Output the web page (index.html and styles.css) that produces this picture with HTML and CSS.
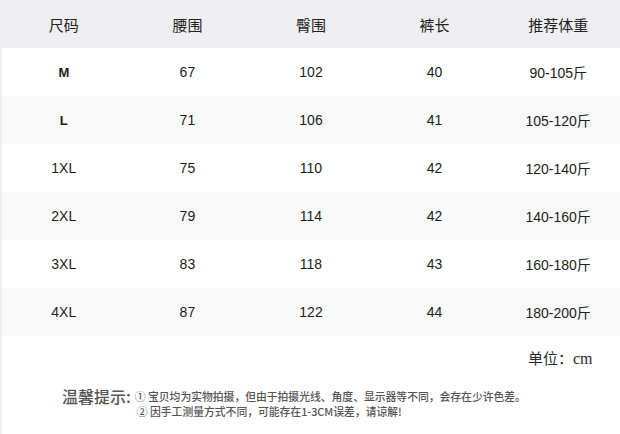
FILE: index.html
```html
<!DOCTYPE html>
<html lang="zh">
<head>
<meta charset="utf-8">
<link rel="stylesheet" href="styles.css">
</head>
<body>
<div class="page">
  <div class="table">
    <div class="row head">
      <div class="cell">尺码</div><div class="cell">腰围</div><div class="cell">臀围</div><div class="cell">裤长</div><div class="cell">推荐体重</div>
    </div>
    <div class="row">
      <div class="cell size bold">M</div><div class="cell">67</div><div class="cell">102</div><div class="cell">40</div><div class="cell w">90-105斤</div>
    </div>
    <div class="row alt">
      <div class="cell size bold">L</div><div class="cell">71</div><div class="cell">106</div><div class="cell">41</div><div class="cell w">105-120斤</div>
    </div>
    <div class="row">
      <div class="cell size">1XL</div><div class="cell">75</div><div class="cell">110</div><div class="cell">42</div><div class="cell w">120-140斤</div>
    </div>
    <div class="row alt">
      <div class="cell size">2XL</div><div class="cell">79</div><div class="cell">114</div><div class="cell">42</div><div class="cell w">140-160斤</div>
    </div>
    <div class="row">
      <div class="cell size">3XL</div><div class="cell">83</div><div class="cell">118</div><div class="cell">43</div><div class="cell w">160-180斤</div>
    </div>
    <div class="row alt">
      <div class="cell size">4XL</div><div class="cell">87</div><div class="cell">122</div><div class="cell">44</div><div class="cell w">180-200斤</div>
    </div>
  </div>
  <div class="unit-row">
    <div class="cell"></div><div class="cell"></div><div class="cell"></div><div class="cell"></div>
    <div class="cell unit"><span class="unit-cjk">单位：</span><span class="unit-cm">cm</span></div>
  </div>
  <div class="notes">
    <div class="notes-label">温馨提示:</div>
    <div class="notes-list">
      <div class="note">① 宝贝均为实物拍摄，但由于拍摄光线、角度、显示器等不同，会存在少许色差。</div>
      <div class="note">② 因手工测量方式不同，可能存在1-3CM误差，请谅解!</div>
    </div>
  </div>
</div>
</body>
</html>
```

FILE: styles.css
```css
html, body {
  margin: 0;
  padding: 0;
  background: #ffffff;
}
.page {
  width: 618px;
  height: 434px;
  border-left: 2px solid #efefef;
  font-family: "Liberation Sans", "Noto Sans CJK SC", sans-serif;
  color: #1c1c1c;
}
.row, .unit-row {
  display: grid;
  grid-template-columns: repeat(5, 1fr);
  height: 48px;
  align-items: center;
}
.row.head {
  background: #efeff1;
}
.row.alt {
  background: #f9f9fa;
}
.cell {
  text-align: center;
  font-size: 14px;
}
.head .cell {
  font-family: "Noto Sans CJK SC", sans-serif;
  font-size: 15px;
  color: #222;
}
.cell.bold {
  font-weight: bold;
  font-size: 13px;
}
.cell.w {
  font-family: "Liberation Sans", "Noto Sans CJK SC", sans-serif;
  font-size: 14px;
}
.unit-row {
  height: 42px;
}
.unit {
  padding-left: 4px;
}
.unit-cjk {
  font-family: "Noto Sans CJK SC", serif;
  font-size: 15px;
  color: #2a2a2a;
}
.unit-cm {
  font-family: "Liberation Serif", serif;
  font-size: 16px;
  color: #2a2a2a;
}
.notes {
  display: flex;
  align-items: flex-start;
  padding-left: 60px;
  padding-top: 8px;
  color: #555;
}
.notes-label {
  font-family: "Noto Sans CJK SC", sans-serif;
  font-size: 16px;
  font-weight: 500;
  line-height: 20px;
  margin-right: 4px;
}
.notes-list {
  padding-top: 3px;
}
.note {
  font-family: "Noto Sans CJK SC", sans-serif;
  font-size: 10.8px;
  font-weight: 500;
  line-height: 15px;
  white-space: nowrap;
}
.note + .note {
  padding-left: 2px;
}
```
